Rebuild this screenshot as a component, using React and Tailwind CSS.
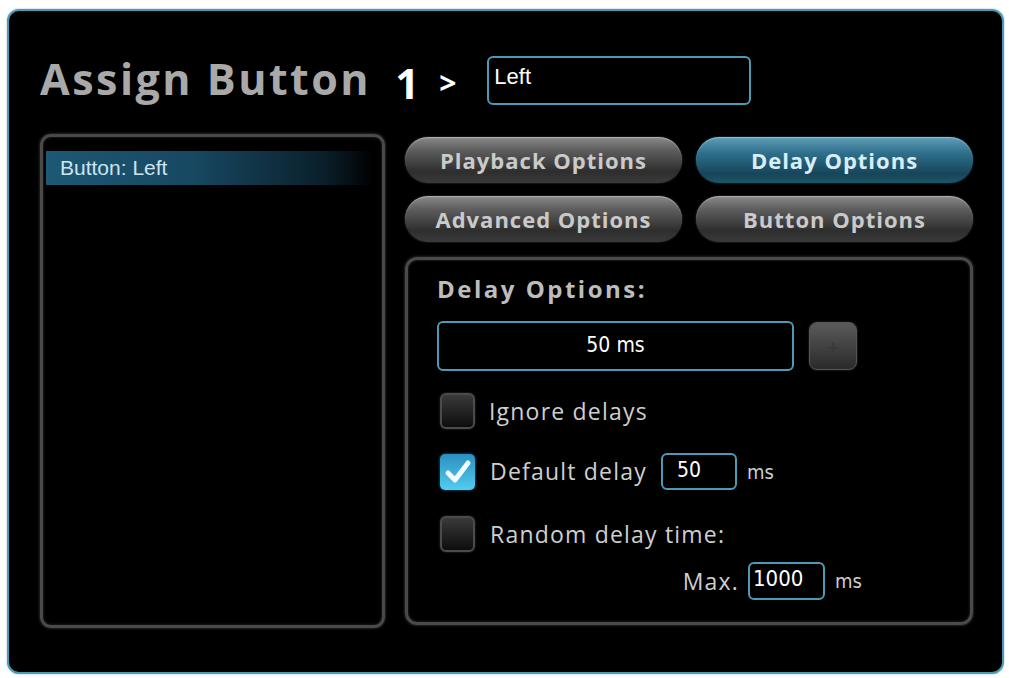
import React from "react";

const pillBase =
  "h-[46px] w-[278px] rounded-full flex items-center justify-center text-[22px] font-bold tracking-[1px] leading-none";
const pillGray =
  pillBase +
  " text-[#cacaca] bg-[linear-gradient(to_bottom,#8a8a8a_0%,#5c5c5c_30%,#2e2e2e_75%,#3a3a3a_100%)] shadow-[inset_0_1px_1px_rgba(255,255,255,0.35),0_0_2px_rgba(120,120,120,0.6)]";
const pillBlue =
  pillBase +
  " text-[#d8eef6] bg-[linear-gradient(to_bottom,#5f9fb8_0%,#2f6f8c_35%,#164559_80%,#1f5569_100%)] shadow-[inset_0_1px_1px_rgba(255,255,255,0.35),0_0_2px_rgba(90,160,190,0.6)]";

const cond = { fontFamily: "'DejaVu Sans Condensed', 'Liberation Sans Narrow', sans-serif" };
const arial = { fontFamily: "'Liberation Sans', Arial, sans-serif" };

function Box({ checked }) {
  if (checked) {
    return (
      <div className="w-[35px] h-[36px] shrink-0 rounded-[5px] bg-[linear-gradient(to_bottom,#2a8fc0,#52cdf0)] flex items-center justify-center shadow-[0_0_3px_rgba(80,190,230,0.6)]">
        <svg width="28" height="26" viewBox="0 0 28 26">
          <path d="M4 14 L11 21 L24 4" fill="none" stroke="#f2fbff" strokeWidth="5" strokeLinecap="round" strokeLinejoin="round" />
        </svg>
      </div>
    );
  }
  return (
    <div className="w-[35px] h-[36px] shrink-0 rounded-[6px] border-2 border-[#4b4b4b] bg-[linear-gradient(to_bottom,#3a3a3a,#0d0d0d)] shadow-[0_0_2px_rgba(130,130,130,0.5)]" />
  );
}

const label = "text-[23px] text-[#cfcfcf] tracking-[1.2px] leading-none";

export default function App() {
  return (
    <div className="w-[1009px] h-[678px] bg-white overflow-hidden pt-[9px] pl-[7px]" style={{ fontFamily: "'Open Sans', sans-serif" }}>
      <div className="w-[997px] h-[665px] bg-black rounded-[12px] border-2 border-[#4e9ab4] shadow-[0_0_2px_rgba(78,154,180,0.7)] pl-[31px] pr-[29px] pt-[44px] flex flex-col">
        {/* header */}
        <div className="flex items-center h-[50px]">
          <div className="text-[43px] font-bold text-[#a9a9a9] tracking-[2.5px] leading-none -mt-[3px]">Assign Button</div>
          <div className="ml-[24px] mt-[6px] text-[42px] font-bold text-white leading-none">1</div>
          <div className="ml-[20px] mt-[6px] text-[30px] font-bold text-white leading-none">&gt;</div>
          <div className="ml-[31px] w-[264px] h-[49px] rounded-[6px] border-2 border-[#4b9bb8] px-[5px] pt-[8px] text-[22px] text-white leading-none" style={arial}>
            Left
          </div>
        </div>

        {/* body */}
        <div className="flex mt-[29px] gap-[20px]">
          {/* list */}
          <div className="w-[345px] h-[494px] rounded-[11px] border-[3px] border-[#4a4a4a] shadow-[0_0_3px_rgba(160,160,160,0.45),inset_0_0_3px_rgba(160,160,160,0.3)] pt-[14px] pl-[3px] pr-[8px]">
            <div className="h-[34px] flex items-center pl-[14px] bg-[linear-gradient(to_right,#1d5874_0%,#174862_45%,#0a1f2a_85%,#000_100%)] text-[21px] text-[#cfe4ef]" style={arial}>
              Button: Left
            </div>
          </div>

          {/* right */}
          <div className="w-[568px] flex flex-col">
            <div className="flex gap-[14px] mt-[3px]">
              <div className={pillGray}>Playback Options</div>
              <div className={pillBlue}>Delay Options</div>
            </div>
            <div className="flex gap-[14px] mt-[13px]">
              <div className={pillGray}>Advanced Options</div>
              <div className={pillGray}>Button Options</div>
            </div>

            <div className="mt-[15px] h-[368px] w-[568px] rounded-[12px] border-[3px] border-[#4a4a4a] shadow-[0_0_3px_rgba(160,160,160,0.45),inset_0_0_3px_rgba(160,160,160,0.3)] pl-[29px] pt-[17px] flex flex-col">
              <div className="text-[24px] font-bold text-[#bdbdbd] tracking-[2.5px] leading-none">Delay Options:</div>
              <div className="flex items-center mt-[20px] gap-[15px]">
                <div className="w-[357px] h-[50px] rounded-[6px] border-2 border-[#4b9bb8] flex items-center justify-center text-[21px] text-white" style={cond}>
                  50 ms
                </div>
                <div className="w-[48px] h-[48px] rounded-[8px] bg-[linear-gradient(to_bottom,#5a5a5a,#2a2a2a)] border border-[#555] flex items-center justify-center shadow-[0_0_2px_rgba(130,130,130,0.5)]">
                  <span className="text-[22px] font-bold text-[#3a3a3a] leading-none">+</span>
                </div>
              </div>

              <div className="flex items-center mt-[22px] pl-[3px]">
                <Box />
                <span className={"ml-[14px] " + label}>Ignore delays</span>
              </div>

              <div className="flex items-center mt-[24px] pl-[3px]">
                <Box checked />
                <span className={"ml-[15px] " + label}>Default delay</span>
                <div className="ml-[14px] w-[76px] h-[37px] rounded-[6px] border-2 border-[#4b9bb8] pl-[14px] pt-[5px] text-[21px] text-white leading-none" style={cond}>
                  50
                </div>
                <span className="ml-[10px] text-[20px] text-[#cfcfcf]" style={cond}>ms</span>
              </div>

              <div className="flex items-center mt-[26px] pl-[3px]">
                <Box />
                <span className={"ml-[15px] " + label}>Random delay time:</span>
              </div>

              <div className="flex items-center mt-[10px]">
                <span className={"w-[302px] text-right " + label}>Max.</span>
                <div className="ml-[9px] w-[77px] h-[38px] rounded-[6px] border-2 border-[#4b9bb8] pl-[3px] pt-[4px] text-[22px] text-white leading-none" style={cond}>
                  1000
                </div>
                <span className="ml-[10px] text-[20px] text-[#cfcfcf]" style={cond}>ms</span>
              </div>
            </div>
          </div>
        </div>
      </div>
    </div>
  );
}
